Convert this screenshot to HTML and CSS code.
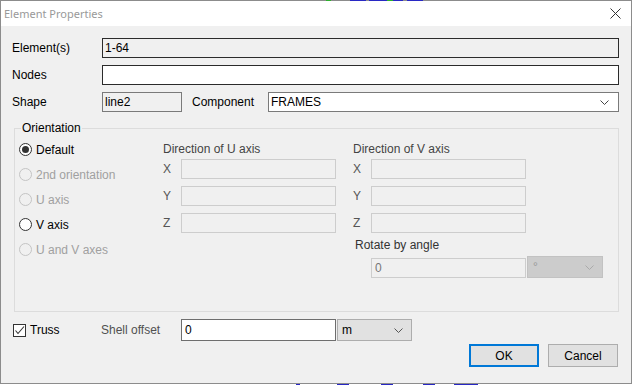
FILE: index.html
```html
<!DOCTYPE html>
<html>
<head>
<title>Element Properties</title>
<link rel="stylesheet" href="styles.css">
</head>
<body>
<div class="edge top">
  <span class="t1 green"></span><span class="t2 blue"></span><span class="t3 blue"></span><span class="t4 green"></span><span class="t5 blue"></span><span class="t6 blue"></span>
</div>

<div class="window">
  <div class="titlebar">
    <span class="title">Element Properties</span>
    <svg class="close" width="11" height="11" viewBox="0 0 11 11">
      <path d="M0.5 0.5L10.5 10.5M10.5 0.5L0.5 10.5" stroke="#333" stroke-width="1" fill="none"/>
    </svg>
  </div>

  <div class="content">
    <div class="row">
      <span class="lbl">Element(s)</span>
      <div class="field ro">1-64</div>
    </div>
    <div class="row">
      <span class="lbl">Nodes</span>
      <div class="field"></div>
    </div>
    <div class="row last">
      <span class="lbl">Shape</span>
      <div class="field box">line2</div>
      <span class="comp-lbl">Component</span>
      <div class="field select">
        <span>FRAMES</span>
        <svg width="9" height="5" viewBox="0 0 9 5"><path d="M0.5 0.5L4.5 4.5L8.5 0.5" stroke="#444" fill="none"/></svg>
      </div>
    </div>

    <fieldset class="group">
      <legend>Orientation</legend>
      <div class="orient">
        <div class="radios">
          <div class="opt"><span class="radio on"></span>Default</div>
          <div class="opt off"><span class="radio"></span>2nd orientation</div>
          <div class="opt off"><span class="radio"></span>U axis</div>
          <div class="opt"><span class="radio"></span>V axis</div>
          <div class="opt off"><span class="radio"></span>U and V axes</div>
        </div>

        <div class="dir">
          <div class="dir-lbl">Direction of U axis</div>
          <div class="axes">
            <div class="axis"><span>X</span><div class="dis"></div></div>
            <div class="axis"><span>Y</span><div class="dis"></div></div>
            <div class="axis"><span>Z</span><div class="dis"></div></div>
          </div>
        </div>

        <div class="dir">
          <div class="dir-lbl">Direction of V axis</div>
          <div class="axes">
            <div class="axis"><span>X</span><div class="dis"></div></div>
            <div class="axis"><span>Y</span><div class="dis"></div></div>
            <div class="axis"><span>Z</span><div class="dis"></div></div>
          </div>
          <div class="rot-lbl">Rotate by angle</div>
          <div class="rot">
            <div class="dis val">0</div>
            <div class="dis-select">
              <span>°</span>
              <svg width="9" height="5" viewBox="0 0 9 5"><path d="M0.5 0.5L4.5 4.5L8.5 0.5" stroke="#aaa" fill="none"/></svg>
            </div>
          </div>
        </div>
      </div>
    </fieldset>

    <div class="bottom">
      <span class="check">
        <svg width="11" height="11" viewBox="0 0 11 11"><path d="M1.5 5.5L4 8.5L10 1.5" stroke="#333" stroke-width="1.1" fill="none"/></svg>
      </span>
      <span class="truss">Truss</span>
      <span class="shell-lbl">Shell offset</span>
      <div class="num">0</div>
      <div class="unit">
        <span>m</span>
        <svg width="9" height="5" viewBox="0 0 9 5"><path d="M0.5 0.5L4.5 4.5L8.5 0.5" stroke="#555" fill="none"/></svg>
      </div>
    </div>

    <div class="actions">
      <div class="btn primary">OK</div>
      <div class="btn">Cancel</div>
    </div>
  </div>
</div>

<div class="edge bot">
  <span class="b1 blue"></span><span class="b2 blue"></span><span class="b3 blue"></span><span class="b4 blue"></span><span class="b5 blue"></span>
</div>
</body>
</html>
```

FILE: styles.css
```css
* {
  box-sizing: border-box;
}

body {
  margin: 0;
  background: #fff;
  font: 12px "Liberation Sans", Arial, sans-serif;
  color: #000;
}

/* bits of the app behind the dialog */
.edge {
  display: flex;
  height: 1px;
}
.edge span {
  height: 1px;
}
.edge.top {
  background: #8c8c8c;
}
.blue {
  background: #2828c4;
}
.green {
  background: #2cb02c;
}
.t1 { margin-left: 326px; width: 5px; }
.t2 { margin-left: 19px; width: 16px; }
.t3 { margin-left: 3px; width: 18px; }
.t4 { width: 6px; }
.t5 { width: 10px; }
.t6 { margin-left: 4px; width: 16px; }

.b1 { margin-left: 296px; width: 4px; }
.b2 { margin-left: 37px; width: 12px; }
.b3 { margin-left: 32px; width: 12px; }
.b4 { margin-left: 30px; width: 12px; }
.b5 { margin-left: 19px; width: 24px; }

.window {
  height: 383px;
  border: 1px solid #8c8c8c;
  border-top: 0;
  background: #f0f0f0;
}

.titlebar {
  height: 25px;
  background: #fff;
  display: flex;
  align-items: center;
  justify-content: space-between;
  padding: 0 10px 0 3px;
}
.title {
  font-family: "Noto Sans", sans-serif;
  font-size: 11px;
  color: #999;
}

.content {
  padding: 12px 12px 0 11px;
}

.row {
  display: flex;
  align-items: center;
  height: 20px;
  margin-bottom: 7px;
}
.row.last {
  margin-bottom: 0;
}
.lbl {
  width: 90px;
}
.field {
  flex: 1;
  height: 20px;
  border: 1px solid #2b2b2b;
  background: #fff;
  padding: 0 2px;
  display: flex;
  align-items: center;
}
.field.ro {
  background: #f0f0f0;
}
.field.box {
  flex: none;
  width: 80px;
  border-color: #7a7a7a;
  background: #f0f0f0;
}
.comp-lbl {
  margin-left: 10px;
  width: 76px;
}
.field.select {
  border-color: #7a7a7a;
  justify-content: space-between;
  padding-right: 9px;
}

.group {
  margin: 9px 0 0 2px;
  border: 1px solid #dcdcdc;
  padding: 2px 0 33px 4px;
  min-width: 0;
}
.group legend {
  padding: 0 1px;
  margin-left: 2px;
  line-height: 14px;
}

.orient {
  display: grid;
  grid-template-columns: 144px 190px 1fr;
}

.opt {
  height: 25px;
  display: flex;
  align-items: center;
  gap: 4px;
}
.opt.off {
  color: #a0a0a0;
}
.radio {
  flex: none;
  width: 13px;
  height: 13px;
  border-radius: 50%;
  border: 1px solid #333;
  background: #fff;
  display: flex;
  align-items: center;
  justify-content: center;
}
.opt.off .radio {
  border-color: #c4c4c4;
  background: #f0f0f0;
}
.radio.on::after {
  content: "";
  width: 7px;
  height: 7px;
  border-radius: 50%;
  background: #333;
}

.dir-lbl {
  margin: 5px 0 3px;
  line-height: 14px;
  color: #444;
}
.axes {
  display: flex;
  flex-direction: column;
  gap: 7px;
}
.axis {
  display: flex;
  align-items: center;
  height: 20px;
}
.axis span {
  width: 18px;
  color: #555;
}
.dis {
  width: 155px;
  height: 20px;
  border: 1px solid #cdcdcd;
  background: #f0f0f0;
}
.rot-lbl {
  margin-top: 5px;
  padding-left: 2px;
  line-height: 14px;
  color: #333;
}
.rot {
  display: flex;
  align-items: flex-end;
  margin-top: 4px;
  padding-left: 18px;
}
.dis.val {
  display: flex;
  align-items: center;
  padding-left: 3px;
  color: #777;
}
.dis-select {
  margin-left: 1px;
  width: 76px;
  height: 22px;
  border: 1px solid #c2c2c2;
  background: #cccccc;
  color: #999;
  display: flex;
  align-items: center;
  justify-content: space-between;
  padding: 0 8px 0 5px;
}

.bottom {
  display: flex;
  align-items: center;
  height: 22px;
  margin-top: 7px;
}
.check {
  width: 13px;
  height: 13px;
  margin-left: 1px;
  border: 1px solid #333;
  background: #fff;
  display: flex;
  align-items: center;
  justify-content: center;
}
.truss {
  margin-left: 4px;
  width: 71px;
}
.shell-lbl {
  width: 80px;
  color: #505050;
}
.num {
  width: 155px;
  height: 22px;
  border: 1px solid #6e6e6e;
  background: #fff;
  padding: 0 3px;
  display: flex;
  align-items: center;
}
.unit {
  margin-left: 1px;
  width: 75px;
  height: 22px;
  border: 1px solid #adadad;
  background: #e1e1e1;
  display: flex;
  align-items: center;
  justify-content: space-between;
  padding: 0 8px 0 4px;
}

.actions {
  display: flex;
  justify-content: flex-end;
  gap: 9px;
  margin-top: 3px;
  padding-right: 1px;
}
.btn {
  width: 70px;
  height: 23px;
  border: 1px solid #adadad;
  background: #e1e1e1;
  display: flex;
  align-items: center;
  justify-content: center;
}
.btn.primary {
  border: 2px solid #0078d7;
}
```
